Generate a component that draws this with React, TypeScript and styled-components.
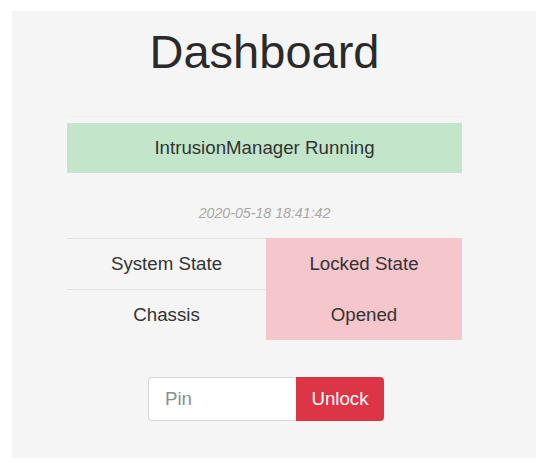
import React from "react";
import styled, { createGlobalStyle } from "styled-components";

const Global = createGlobalStyle`
  html, body { margin: 0; padding: 0; background: #ffffff; }
  body { font-family: "Liberation Sans", Arial, sans-serif; color: #333333; }
`;

const Page = styled.div`
  padding: 11px 14px 14px 12px;
`;

const Panel = styled.main`
  background: #f5f5f5;
  height: 447px;
  box-sizing: border-box;
  padding: 12px 0 0 55px;
`;

const Column = styled.div`
  width: 395px;
  display: flex;
  flex-direction: column;
`;

const Title = styled.h1`
  margin: 0;
  font-size: 47px;
  font-weight: 400;
  line-height: 57px;
  text-align: center;
  color: #2a2a2a;
`;

const Rule = styled.hr`
  margin: 36px 0 0 0;
  border: 0;
  border-top: 1px solid #efefef;
`;

const Alert = styled.div`
  margin-top: 6px;
  height: 50px;
  display: flex;
  align-items: center;
  justify-content: center;
  background: #c3e6cb;
  font-size: 18.7px;
  color: #333;
`;

const Stamp = styled.div`
  margin-top: 32px;
  text-align: center;
  font-style: italic;
  font-size: 14.2px;
  line-height: 16px;
  color: #a8a8a8;
`;

const Table = styled.div`
  margin-top: 17px;
  display: grid;
  grid-template-columns: 199px 196px;
`;

const Cell = styled.div<{ $danger?: boolean }>`
  height: 50px;
  display: flex;
  align-items: center;
  justify-content: center;
  font-size: 18.7px;
  color: #333;
  border-top: 1px solid ${(p) => (p.$danger ? "#f5c6cb" : "#e2e2e2")};
  background: ${(p) => (p.$danger ? "#f5c6cb" : "transparent")};
`;

const Form = styled.form`
  margin-top: 37px;
  display: flex;
  justify-content: center;
  padding-left: 3px;
`;

const PinInput = styled.input`
  box-sizing: border-box;
  width: 148px;
  height: 44px;
  border: 1px solid #d6d6d6;
  border-right: 0;
  border-radius: 4px 0 0 4px;
  background: #fff;
  padding: 0 16px;
  font-family: "Liberation Sans", Arial, sans-serif;
  font-size: 18.7px;
  color: #333;
  outline: none;
  &::placeholder { color: #8a8f96; }
`;

const UnlockButton = styled.button`
  box-sizing: border-box;
  width: 88px;
  height: 44px;
  border: 0;
  border-radius: 0 4px 4px 0;
  background: #dc3545;
  color: #fff;
  font-family: "Liberation Sans", Arial, sans-serif;
  font-size: 18.7px;
  cursor: pointer;
`;

export default function App() {
  const rows = [
    ["System State", "Locked State"],
    ["Chassis", "Opened"],
  ];
  return (
    <Page>
      <Global />
      <Panel>
        <Column>
          <Title>Dashboard</Title>
          <Rule />
          <Alert>IntrusionManager Running</Alert>
          <Stamp>2020-05-18 18:41:42</Stamp>
          <Table>
            {rows.map(([k, v]) => (
              <React.Fragment key={k}>
                <Cell>{k}</Cell>
                <Cell $danger>{v}</Cell>
              </React.Fragment>
            ))}
          </Table>
          <Form onSubmit={(e) => e.preventDefault()}>
            <PinInput placeholder="Pin" />
            <UnlockButton type="submit">Unlock</UnlockButton>
          </Form>
        </Column>
      </Panel>
    </Page>
  );
}
